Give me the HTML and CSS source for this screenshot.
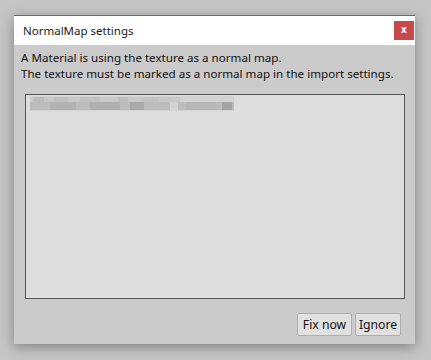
FILE: index.html
```html
<!DOCTYPE html>
<html>
<head>
<meta charset="utf-8">
<link rel="stylesheet" href="styles.css">
</head>
<body>
<div class="dialog">
  <div class="titlebar">
    <span class="title">NormalMap settings</span>
    <div class="close">x</div>
  </div>
  <div class="content">
    <p class="msg">A Material is using the texture as a normal map.<br>The texture must be marked as a normal map in the import settings.</p>
    <div class="list">
      <svg class="blur" width="204" height="15" viewBox="0 0 204 15">
        <rect x="0" y="0" width="204" height="15" fill="#d2d2d2"/>
        <rect x="0" y="1" width="150" height="5" fill="#c8c8c8"/>
        <rect x="4" y="1" width="10" height="5" fill="#bcbcbc"/>
        <rect x="24" y="1" width="14" height="5" fill="#c0c0c0"/>
        <rect x="50" y="1" width="20" height="5" fill="#c2c2c2"/>
        <rect x="88" y="1" width="10" height="5" fill="#bdbdbd"/>
        <rect x="112" y="1" width="16" height="5" fill="#c3c3c3"/>
        <rect x="0" y="6" width="204" height="8" fill="#bcbcbc"/>
        <rect x="20" y="6" width="26" height="8" fill="#b2b2b2"/>
        <rect x="60" y="6" width="30" height="8" fill="#b0b0b0"/>
        <rect x="100" y="6" width="14" height="8" fill="#aaaaaa"/>
        <rect x="140" y="6" width="8" height="8" fill="#d4d4d4"/>
        <rect x="156" y="6" width="30" height="8" fill="#b6b6b6"/>
        <rect x="192" y="6" width="10" height="8" fill="#a4a4a4"/>
      </svg>
    </div>
    <div class="buttons">
      <button class="btn fix">Fix now</button>
      <button class="btn ignore">Ignore</button>
    </div>
  </div>
</div>
</body>
</html>
```
FILE: styles.css
```css
html, body {
  margin: 0;
  padding: 0;
}
body {
  width: 431px;
  height: 360px;
  background: #c5c5c5;
  padding: 15px 0 0 14px;
  box-sizing: border-box;
  font-family: "Noto Sans", "Open Sans", sans-serif;
  overflow: hidden;
}
.dialog {
  width: 401px;
  height: 329px;
  background: #cbcbcb;
  box-shadow: 0 3px 12px rgba(0,0,0,0.35);
  border-top: 1px solid #6a6a6a;
  box-sizing: border-box;
  display: flex;
  flex-direction: column;
}
.titlebar {
  height: 29px;
  background: #ffffff;
  display: flex;
  align-items: center;
  justify-content: space-between;
  padding-left: 9px;
  padding-right: 1px;
  box-sizing: border-box;
}
.title {
  font-size: 11.5px;
  color: #1a1a1a;
}
.close {
  width: 20px;
  height: 19px;
  background: #c9484b;
  color: #ffffff;
  font-size: 10px;
  font-weight: bold;
  line-height: 17px;
  text-align: center;
}
.content {
  flex: 1;
  display: flex;
  flex-direction: column;
  padding: 5px 10px 8px 7px;
}
.msg {
  margin: 0;
  font-size: 11.6px;
  line-height: 16px;
  color: #111111;
  white-space: nowrap;
}
.list {
  margin: 12px 0 0 4px;
  height: 205px;
  background: #dedede;
  border: 1px solid #555555;
  box-sizing: border-box;
  padding: 1px 0 0 4px;
}
.blur {
  display: block;
}
.buttons {
  margin-top: 14px;
  display: flex;
  justify-content: flex-end;
  gap: 3px;
  padding-right: 4px;
}
.btn {
  height: 23px;
  background: #e1e1e1;
  border: 1px solid #adadad;
  border-radius: 2px;
  font-family: "Noto Sans", "Open Sans", sans-serif;
  font-size: 12.2px;
  color: #111111;
  padding: 0;
  line-height: 20px;
}
.fix {
  width: 55px;
}
.ignore {
  width: 46px;
}
```
